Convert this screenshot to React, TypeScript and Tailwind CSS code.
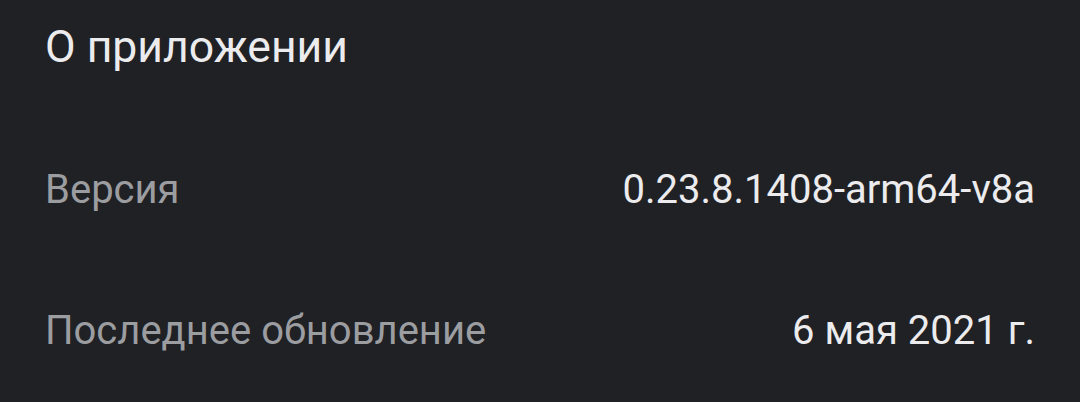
import React from "react";

export default function App() {
  return (
    <div
      className="w-[1080px] h-[402px] bg-[#202125] flex flex-col px-[45px] overflow-hidden"
      style={{ fontFamily: "Roboto, 'Noto Sans', sans-serif" }}
    >
      <div className="h-[94px] flex items-center">
        <h1 className="text-[44.5px] leading-none text-[#ececee] font-normal">О приложении</h1>
      </div>
      <div className="mt-[25px] h-[142px] flex items-center justify-between">
        <span className="text-[40px] leading-none text-[#9b9da1]">Версия</span>
        <span className="text-[40px] leading-none text-[#ececee]">0.23.8.1408-arm64-v8a</span>
      </div>
      <div className="h-[142px] flex items-center justify-between">
        <span className="text-[40px] leading-none text-[#9b9da1]">Последнее обновление</span>
        <span className="text-[40px] leading-none text-[#ececee]">6 мая 2021 г.</span>
      </div>
    </div>
  );
}
